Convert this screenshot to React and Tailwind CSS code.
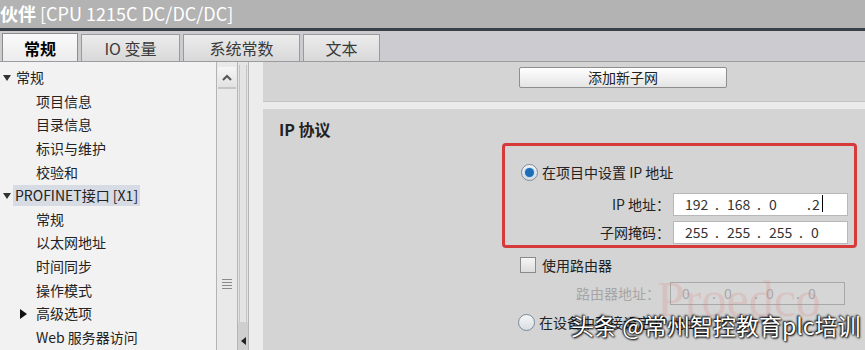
import React from 'react';

const tabs = [
  { label: '常规', w: 'w-[76px]', active: true },
  { label: 'IO 变量', w: 'w-[99px]' },
  { label: '系统常数', w: 'w-[117px]' },
  { label: '文本', w: 'w-[77px]' },
];

const tree = [
  { label: '常规', level: 0, open: true },
  { label: '项目信息', level: 1 },
  { label: '目录信息', level: 1 },
  { label: '标识与维护', level: 1 },
  { label: '校验和', level: 1 },
  { label: 'PROFINET接口 [X1]', level: 0, open: true, selected: true },
  { label: '常规', level: 1 },
  { label: '以太网地址', level: 1 },
  { label: '时间同步', level: 1 },
  { label: '操作模式', level: 1 },
  { label: '高级选项', level: 1, closed: true },
  { label: 'Web 服务器访问', level: 1 },
];

const Radio = ({ checked }) => (
  <div className="w-[17px] h-[17px] rounded-full border border-[#7d8a96] bg-gradient-to-b from-[#f4f6f8] to-[#d9dee3] flex items-center justify-center shrink-0">
    {checked && <div className="w-[9px] h-[9px] rounded-full bg-[#1c6fb6] shadow-[0_0_2px_#6bb3f0]" />}
  </div>
);

const IpField = ({ parts, disabled, cursor, wideLast }) => (
  <div
    className={`w-[175px] h-[23px] flex items-center text-[14px] pl-[11px] whitespace-pre ${
      disabled ? 'bg-[#d6d6d6] border border-[#a8a8a8] text-[#a8a8a8]' : 'bg-white border border-[#b8b8b8] text-[#333]'
    }`}
  >
    <span className="w-[30px]">{parts[0]}</span>
    <span className="w-[12px]">.</span>
    <span className="w-[30px]">{parts[1]}</span>
    <span className="w-[12px]">.</span>
    <span className={wideLast ? 'w-[38px]' : 'w-[30px]'}>{parts[2]}</span>
    <span className={wideLast ? 'w-[5px]' : 'w-[12px]'}>.</span>
    <span className="relative">
      {parts[3]}
      {cursor && <span className="absolute right-[-3px] top-[1px] w-px h-[17px] bg-black" />}
    </span>
  </div>
);

const App = () => {
  return (
    <div className="w-[865px] h-[350px] overflow-hidden flex flex-col font-['Noto_Sans_CJK_SC','Noto_Sans',sans-serif] bg-[#d4d4d4]">
      {/* title */}
      <div className="h-[28px] bg-[#b3b3b3] text-white text-[18px] leading-[26px] whitespace-nowrap">
        <span className="font-bold">伙伴</span> [CPU 1215C DC/DC/DC]
      </div>
      <div className="h-[3px] bg-[#3a4049]" />

      {/* tabs */}
      <div className="h-[31px] bg-[#ccccd0] flex items-end gap-[3px] pl-[2px] border-b border-[#9c9ca0]">
        {tabs.map((t) => (
          <div
            key={t.label}
            className={`${t.w} h-[27px] flex items-center justify-center text-[16px] border border-b-0 ${
              t.active
                ? 'bg-gradient-to-b from-[#fafafa] to-[#ececec] border-[#8c8c8c] font-bold text-black h-[28px]'
                : 'bg-gradient-to-b from-[#ececec] to-[#d8d8d8] border-[#9a9a9a] text-[#3a3a3a]'
            }`}
          >
            {t.label}
          </div>
        ))}
      </div>

      <div className="flex-1 flex min-h-0">
        {/* tree */}
        <div className="w-[216px] bg-[#f2f2f2] pt-[4px] text-[14px] text-[#222]">
          {tree.map((n, i) => (
            <div key={i} className="h-[23.6px] flex items-center">
              <div className={`${n.level === 0 ? 'w-[14px] pl-[3px]' : 'w-[36px] pl-[20px]'} shrink-0 flex items-center`}>
                {n.open && (
                  <div className="w-0 h-0 border-l-[4px] border-r-[4px] border-t-[6px] border-l-transparent border-r-transparent border-t-[#333]" />
                )}
                {n.closed && (
                  <div className="w-0 h-0 border-t-[5px] border-b-[5px] border-l-[7px] border-t-transparent border-b-transparent border-l-[#111]" />
                )}
              </div>
              <span className={`${n.selected ? 'bg-[#d7dce4] px-[2px] ml-[-1px] leading-[21px]' : ''} ${n.level === 0 ? 'pl-[2px]' : ''}`}>
                {n.label}
              </span>
            </div>
          ))}
        </div>

        {/* scrollbar */}
        <div className="w-[22px] bg-[#e9e9e9] border-x border-[#b4b4b4] pt-[5px] flex flex-col">
          <div className="h-[22px] mx-[1px] bg-gradient-to-b from-[#f6f6f6] to-[#e2e2e2] border-b-2 border-[#c6c6c6] flex items-center justify-center">
            <svg width="10" height="7" viewBox="0 0 10 7">
              <path d="M1 6 L5 2 L9 6" stroke="#555" strokeWidth="2" fill="none" />
            </svg>
          </div>
          <div className="flex-1 flex flex-col items-center pt-[190px]">
            <div className="w-[10px] flex flex-col gap-[2px]">
              <div className="h-px bg-[#8a8a8a]" />
              <div className="h-px bg-[#8a8a8a]" />
              <div className="h-px bg-[#8a8a8a]" />
              <div className="h-px bg-[#8a8a8a]" />
            </div>
          </div>
        </div>
        <div className="w-[11px] bg-[#e4e4e4] border-r border-[#b4b4b4] flex flex-col pt-[3px]">
          <div className="flex-1 border-x border-[#c4c4c4] mx-[1px]" />
          <div className="h-[28px] bg-[#cfcfcf] flex items-end justify-center pb-[5px]">
            <div className="w-0 h-0 border-t-[4px] border-b-[4px] border-r-[5px] border-t-transparent border-b-transparent border-r-[#222]" />
          </div>
        </div>
        <div className="w-[14px] bg-[#ececec]" />

        {/* properties */}
        <div className="flex-1 flex flex-col bg-[#d4d4d4] relative">
          <div className="h-[40px] pl-[256px] pt-[5px] border-b border-[#c2c2c2]">
            <div className="w-[208px] h-[21px] rounded-[2px] border border-[#8e8e8e] bg-gradient-to-b from-[#ffffff] to-[#e4e4e4] flex items-center justify-center text-[14px] text-[#222]">
              添加新子网
            </div>
          </div>
          <div className="h-[7px] bg-[#ebebeb]" />
          <div className="flex-1 pt-[9px] pl-[16px]">
            <div className="text-[16px] font-bold text-[#222] leading-[22px]">IP 协议</div>
            <div className="ml-[223px] mt-[3px] w-[355px] h-[105px] border-[3px] border-[#d63a3a] rounded-[4px] pt-[15px]">
              <div className="h-[22px] flex items-center gap-[4px] pl-[16px] text-[14px] text-[#222]">
                <Radio checked />
                <span>在项目中设置 IP 地址</span>
              </div>
              <div className="mt-[10px] h-[23px] flex items-center text-[14px] text-[#222]">
                <span className="w-[168px] text-right pr-[3px]">IP 地址：</span>
                <IpField parts={['192', '168', '0', '2']} cursor wideLast />
              </div>
              <div className="mt-[5px] h-[23px] flex items-center text-[14px] text-[#222]">
                <span className="w-[168px] text-right pr-[3px]">子网掩码：</span>
                <IpField parts={['255', '255', '255', '0']} />
              </div>
            </div>
            <div className="ml-[223px] w-[355px] pt-[8px]">
              <div className="h-[18px] flex items-center gap-[6px] pl-[18px] text-[14px] text-[#222]">
                <div className="w-[16px] h-[16px] border border-[#8a8a8a] bg-gradient-to-b from-[#f6f6f6] to-[#dcdcdc] shrink-0" />
                <span>使用路由器</span>
              </div>
              <div className="mt-[8px] h-[23px] flex items-center text-[14px] text-[#a6a6a6]">
                <span className="w-[168px] text-right pr-[10px]">路由器地址：</span>
                <IpField parts={['0', '0', '0', '0']} disabled />
              </div>
              <div className="mt-[6px] h-[22px] flex items-center gap-[4px] pl-[16px] text-[14px] text-[#222]">
                <Radio />
                <span>在设备中直接设定 IP 地址</span>
              </div>
            </div>
          </div>

          {/* watermarks */}
          <div className="absolute left-[394px] top-[212px] text-[50px] leading-none text-[#e07a7a] opacity-20 font-['Liberation_Serif',serif] pointer-events-none">
            Proedco
          </div>
          <div className="absolute left-[308px] top-[248px] text-[23px] leading-[30px] text-white whitespace-nowrap pointer-events-none [text-shadow:0_0_2px_#000,1px_1px_2px_#000,-1px_-1px_2px_#000]">
            头条 @常州智控教育plc培训
          </div>
        </div>
      </div>
    </div>
  );
};

export default App;
